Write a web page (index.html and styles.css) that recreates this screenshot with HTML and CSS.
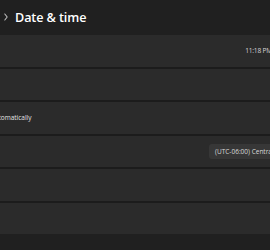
FILE: index.html
```html
<!DOCTYPE html>
<html lang="en">
<head>
  <meta charset="UTF-8">
  <meta name="viewport" content="width=device-width, initial-scale=1.0">
  <title>Date &amp; time</title>
  <link rel="stylesheet" href="styles.css">
</head>
<body>
  <div class="window">
    <header class="title-bar">
      <!-- breadcrumb chevron -->
      <svg class="chevron" viewBox="0 0 4 8" fill="none" stroke="currentColor" stroke-width="1.1" stroke-linecap="round" stroke-linejoin="round">
        <polyline points="0.8,1 3.2,4 0.8,7"></polyline>
      </svg>
      <h1>Date &amp; time</h1>
    </header>

    <div class="settings">
      <div class="row">
        <span class="label"></span>
        <span class="value time">11:18 PM</span>
      </div>
      <div class="row"></div>
      <div class="row">
        <span class="label">Set time zone automatically</span>
      </div>
      <div class="row">
        <span class="label"></span>
        <div class="select">(UTC-06:00) Central Time (US &amp; Canada)</div>
      </div>
      <div class="row"></div>
      <div class="row"></div>
    </div>
  </div>
</body>
</html>
```

FILE: styles.css
```css
*, *::before, *::after {
  margin: 0;
  padding: 0;
  box-sizing: border-box;
}

html, body {
  width: 270px;
  height: 250px;
  overflow: hidden;
}

body {
  font-family: "Open Sans", "Noto Sans", sans-serif;
  background-color: #202020;
  color: #ffffff;
}

.window {
  width: 270px;
}

.title-bar {
  height: 35px;
  display: flex;
  align-items: center;
  gap: 6px;
  padding-left: 4px;
  padding-bottom: 1px;
}

.chevron {
  width: 4px;
  height: 8px;
  color: #bdbdbd;
  margin-right: 1px;
}

.title-bar h1 {
  font-size: 12.6px;
  font-weight: 600;
  letter-spacing: -0.1px;
  color: #ffffff;
}

/* wider than the frame: the window is cropped on both sides */
.settings {
  display: flex;
  flex-direction: column;
  gap: 2px;
  background-color: #1c1c1c;
  margin-left: -66px;
  width: 442px;
}

.row {
  height: 31.5px;
  background-color: #2b2b2b;
  display: flex;
  align-items: center;
  padding: 0 14px;
  font-size: 6.5px;
  color: #e4e4e4;
}

.label {
  flex: 1;
  white-space: nowrap;
}

.time {
  margin-right: 90px;
  white-space: nowrap;
  font-size: 6.6px;
  letter-spacing: -0.2px;
  color: #d6d6d6;
}

.select {
  background-color: #373737;
  border-radius: 3px;
  height: 15px;
  display: flex;
  align-items: center;
  padding: 0 6px;
  margin-right: 21px;
  white-space: nowrap;
  font-size: 6.5px;
  color: #d8d8d8;
}
```
